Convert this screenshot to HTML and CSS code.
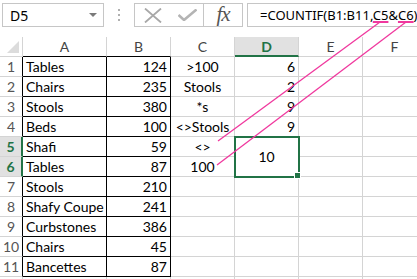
FILE: index.html
```html
<!DOCTYPE html>
<html lang="en">
<head>
  <meta charset="UTF-8">
  <title>COUNTIF</title>
  <link rel="stylesheet" href="styles.css">
</head>
<body>
  <div class="formula-bar">
    <div class="name-box">
      <span>D5</span>
      <span class="drop-arrow"></span>
    </div>
    <div class="grip">
      <svg width="2" height="12" viewBox="0 0 2 12"><rect x="0" y="0" width="2" height="2" fill="#b0b0b0"/><rect x="0" y="5" width="2" height="2" fill="#b0b0b0"/><rect x="0" y="10" width="2" height="2" fill="#b0b0b0"/></svg>
    </div>
    <div class="fn-buttons">
      <span class="fn-btn cancel">
        <svg width="18" height="15" viewBox="0 0 18 15"><path d="M1 0.5 L17 14.5 M17 0.5 L1 14.5" stroke="#a8a8a8" stroke-width="1.8" fill="none"/></svg>
      </span>
      <span class="fn-btn enter">
        <svg width="19" height="12" viewBox="0 0 19 12"><path d="M0.5 6 L6 11 L18.5 0.5" stroke="#b4b4b4" stroke-width="2.6" fill="none"/></svg>
      </span>
      <span class="fx">fx</span>
    </div>
    <div class="formula-input">=COUNTIF(B1:B11,<span class="ref">C5</span>&amp;<span class="ref">C6</span>)</div>
  </div>

  <div class="sheet">
    <div class="corner">
      <svg width="12" height="12" viewBox="0 0 12 12"><polygon points="0,12 12,12 12,0" fill="#dcdcdc"/></svg>
    </div>
    <div class="ch tb">A</div>
    <div class="ch tb">B</div>
    <div class="ch">C</div>
    <div class="ch sel">D</div>
    <div class="ch">E</div>
    <div class="ch">F</div>

    <div class="rh">1</div><div class="cell tb">Tables</div><div class="cell tb num">124</div><div class="cell mid">&gt;100</div><div class="cell num">6</div><div class="cell"></div><div class="cell"></div>
    <div class="rh">2</div><div class="cell tb">Chairs</div><div class="cell tb num">235</div><div class="cell mid">Stools</div><div class="cell num">2</div><div class="cell"></div><div class="cell"></div>
    <div class="rh">3</div><div class="cell tb">Stools</div><div class="cell tb num">380</div><div class="cell mid">*s</div><div class="cell num">9</div><div class="cell"></div><div class="cell"></div>
    <div class="rh">4</div><div class="cell tb">Beds</div><div class="cell tb num">100</div><div class="cell mid">&lt;&gt;Stools</div><div class="cell num">9</div><div class="cell"></div><div class="cell"></div>
    <div class="rh sel">5</div><div class="cell tb">Shafi</div><div class="cell tb num">59</div><div class="cell mid">&lt;&gt;</div>
    <div class="cell merged">10<span class="fill-handle"></span></div><div class="cell"></div><div class="cell"></div>
    <div class="rh sel">6</div><div class="cell tb">Tables</div><div class="cell tb num">87</div><div class="cell mid">100</div><div class="cell"></div><div class="cell"></div>
    <div class="rh">7</div><div class="cell tb">Stools</div><div class="cell tb num">210</div><div class="cell"></div><div class="cell"></div><div class="cell"></div><div class="cell"></div>
    <div class="rh">8</div><div class="cell tb">Shafy Coupe</div><div class="cell tb num">241</div><div class="cell"></div><div class="cell"></div><div class="cell"></div><div class="cell"></div>
    <div class="rh">9</div><div class="cell tb">Curbstones</div><div class="cell tb num">386</div><div class="cell"></div><div class="cell"></div><div class="cell"></div><div class="cell"></div>
    <div class="rh">10</div><div class="cell tb">Chairs</div><div class="cell tb num">45</div><div class="cell"></div><div class="cell"></div><div class="cell"></div><div class="cell"></div>
    <div class="rh">11</div><div class="cell tb">Bancettes</div><div class="cell tb num">87</div><div class="cell"></div><div class="cell"></div><div class="cell"></div><div class="cell"></div>
    <div class="rh plain"></div><div class="cell"></div><div class="cell"></div><div class="cell"></div><div class="cell"></div><div class="cell"></div><div class="cell"></div>
  </div>

  <!-- pointers from the formula references to their cells -->
  <svg class="pointers" width="417" height="279" viewBox="0 0 417 279">
    <line x1="380" y1="22" x2="218" y2="141" />
    <line x1="406" y1="22" x2="217" y2="165" />
  </svg>
</body>
</html>
```

FILE: styles.css
```css
body {
  margin: 0;
  width: 417px;
  height: 279px;
  overflow: hidden;
  position: relative;
  background-color: white;
  font-family: Lato, "Liberation Sans", sans-serif;
  color: #000;
}

/* formula bar */

.formula-bar {
  display: flex;
  align-items: flex-start;
  height: 30px;
  padding: 3px 0 0 2px;
  box-sizing: border-box;
  font-family: "Noto Sans", "Liberation Sans", sans-serif;
}

.name-box {
  width: 102px;
  height: 24px;
  box-sizing: border-box;
  border: 1px solid #c6c6c6;
  display: flex;
  align-items: center;
  justify-content: space-between;
  padding: 0 6px 0 7px;
  font-size: 14px;
}

.drop-arrow {
  width: 0;
  height: 0;
  border-left: 4px solid transparent;
  border-right: 4px solid transparent;
  border-top: 4px solid #7a7a7a;
}

.grip {
  width: 30px;
  height: 24px;
  display: flex;
  align-items: center;
  justify-content: center;
}

.fn-buttons {
  width: 109px;
  height: 24px;
  box-sizing: border-box;
  border: 1px solid #c6c6c6;
  display: flex;
}

.fn-btn {
  display: flex;
  align-items: center;
  justify-content: center;
}

.fn-btn.cancel {
  width: 36px;
}

.fn-btn.enter {
  width: 32px;
}

.fx {
  flex: 1;
  border-left: 1px solid #c6c6c6;
  text-align: center;
  font-family: "Liberation Serif", serif;
  font-style: italic;
  font-size: 21px;
  line-height: 20px;
  color: #555;
  letter-spacing: -1px;
}

.formula-input {
  flex: 1;
  height: 24px;
  box-sizing: border-box;
  margin-left: 4px;
  border: 1px solid #c6c6c6;
  border-right: none;
  padding-left: 12px;
  font-size: 13px;
  line-height: 22px;
  white-space: nowrap;
  overflow: hidden;
}

.ref {
  text-decoration: underline;
  text-decoration-color: #f0389e;
  text-decoration-thickness: 2px;
  text-underline-offset: 1px;
}

/* sheet grid */

.sheet {
  display: grid;
  grid-template-columns: 23px 84px 64px 64px 64px 64px 64px;
  grid-auto-rows: 20px;
  margin-top: 7px;
}

.corner,
.ch,
.rh,
.cell {
  box-sizing: border-box;
  border-right: 1px solid #d4d4d4;
  border-bottom: 1px solid #d4d4d4;
  font-size: 14px;
  line-height: 19px;
  white-space: nowrap;
  overflow: hidden;
}

.corner {
  display: flex;
  align-items: flex-end;
  justify-content: flex-end;
  padding: 0 3px 3px 0;
}

.ch {
  text-align: center;
  color: #444;
}

.ch.tb {
  border-bottom-color: #000;
}

.ch.sel {
  background-color: #e1e1e1;
  color: #217346;
  font-weight: bold;
  border-bottom: 2px solid #217346;
}

.rh {
  text-align: center;
  color: #555;
  border-right-color: #000;
}

.rh.plain {
  border-right-color: #d4d4d4;
}

.rh.sel {
  background-color: #e1e1e1;
  color: #217346;
  font-weight: bold;
  border-right: 2px solid #217346;
}

.cell {
  padding: 0 3px;
}

.cell.tb {
  border-right-color: #000;
  border-bottom-color: #000;
}

.cell.num {
  text-align: right;
}

.cell.mid {
  text-align: center;
  padding: 0;
}

.cell.merged {
  grid-row: span 2;
  display: flex;
  align-items: center;
  justify-content: center;
  position: relative;
  overflow: visible;
  z-index: 1;
  outline: 2px solid #217346;
  outline-offset: -1px;
}

.fill-handle {
  position: absolute;
  right: -3px;
  bottom: -3px;
  width: 5px;
  height: 5px;
  background-color: #217346;
  border: 1px solid white;
}

.pointers {
  position: absolute;
  top: 0;
  left: 0;
  z-index: 2;
  pointer-events: none;
}

.pointers line {
  stroke: #f0389e;
  stroke-width: 1.3;
}
```
